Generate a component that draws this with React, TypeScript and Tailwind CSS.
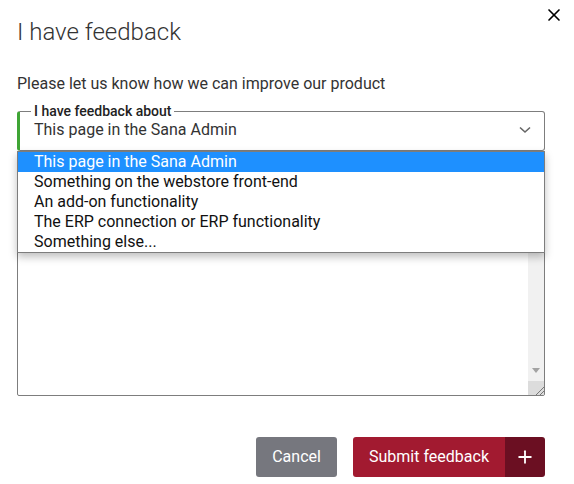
import { Plus, X } from "lucide-react";

const options = [
    "This page in the Sana Admin",
    "Something on the webstore front-end",
    "An add-on functionality",
    "The ERP connection or ERP functionality",
    "Something else...",
];

export default function App() {
    return (
        <div className="relative w-[574px] h-[484px] bg-white text-[#333] font-['Roboto',sans-serif] overflow-hidden">
            <button className="absolute right-[10px] top-[5px] text-black">
                <X size={20} strokeWidth={2} />
            </button>

            <div className="pl-[17px] pr-[29px] pt-[17px]">
                <h1 className="text-[24px] leading-[30px] font-light text-[#333]">I have feedback</h1>

                <p className="mt-[27px] text-[16px] leading-[20px] text-[#333]">
                    Please let us know how we can improve our product
                </p>

                <div className="relative mt-[17px]">
                    {/* select */}
                    <div className="relative h-[40px] rounded-[3px] border border-[#7d7d7d] border-l-[3px] border-l-[#3fa535] bg-white">
                        <span className="absolute left-[11px] -top-[9px] bg-white px-[3px] text-[14px] leading-[17px] font-medium text-[#222]">
                            I have feedback about
                        </span>
                        <div className="pl-[14px] pt-[8px] text-[16px] leading-[20px] text-[#333]">
                            This page in the Sana Admin
                        </div>
                        <svg className="absolute right-[12px] top-[13px]" width="14" height="10" viewBox="0 0 14 10">
                            <path d="M2 2.5 L7 7 L12 2.5" fill="none" stroke="#666" strokeWidth="1.6" />
                        </svg>
                    </div>

                    {/* textarea */}
                    <div className="mt-[15px] h-[230px] flex rounded-[2px] border border-[#7d7d7d] bg-white">
                        <div className="flex-1" />
                        <div className="w-[16px] flex flex-col bg-[#f1f1f1]">
                            <div className="flex-1 flex items-end justify-center pb-[8px]">
                                <svg width="8" height="5" viewBox="0 0 8 5">
                                    <path d="M0 0 L8 0 L4 5 Z" fill="#a3a3a3" />
                                </svg>
                            </div>
                            <div className="h-[14px] bg-[#dcdcdc] flex items-end justify-end">
                                <svg width="10" height="10" viewBox="0 0 10 10">
                                    <path d="M2 10 L10 2 M6 10 L10 6" stroke="#777" strokeWidth="1" />
                                </svg>
                            </div>
                        </div>
                    </div>

                    {/* dropdown list */}
                    <ul className="absolute left-0 right-0 top-[40px] border border-[#7d7d7d] bg-white shadow-[0_4px_8px_rgba(0,0,0,0.25)]">
                        {options.map((o, i) => (
                            <li
                                key={o}
                                className={
                                    i === 0
                                        ? "h-[20px] pl-[16px] text-[16px] leading-[20px] bg-[#1e90ff] text-white"
                                        : "h-[20px] pl-[16px] text-[16px] leading-[20px] text-[#111]"
                                }
                            >
                                {o}
                            </li>
                        ))}
                    </ul>
                </div>

                <div className="mt-[41px] flex justify-end gap-[16px]">
                    <button className="h-[40px] w-[81px] rounded-[3px] bg-[#76777e] text-white text-[16px]">
                        Cancel
                    </button>
                    <button className="h-[40px] flex rounded-[3px] overflow-hidden text-white text-[16px]">
                        <span className="h-full pl-[16px] pr-[16px] flex items-center bg-[#a21a30]">Submit feedback</span>
                        <span className="h-full w-[40px] flex items-center justify-center bg-[#6b0f22]">
                            <Plus size={20} strokeWidth={2.2} />
                        </span>
                    </button>
                </div>
            </div>
        </div>
    );
}
